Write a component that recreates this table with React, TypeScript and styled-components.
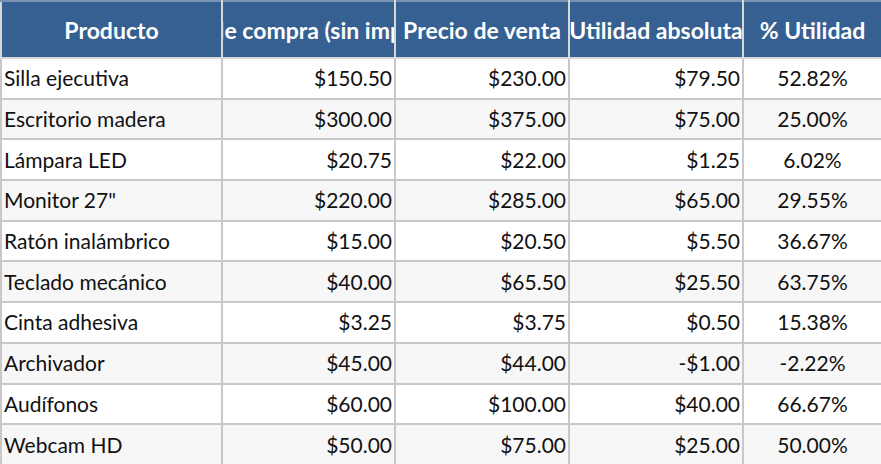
import React from "react";
import styled, { createGlobalStyle } from "styled-components";

const Global = createGlobalStyle`
  html, body { margin: 0; padding: 0; background: #ffffff; }
  body { font-family: Lato, "Open Sans", sans-serif; }
`;

const Table = styled.table`
  width: 881px;
  table-layout: fixed;
  border-collapse: collapse;
  font-family: Lato, sans-serif;
  font-size: 21px;
  color: #111;
`;

const HeadCell = styled.th`
  height: 55px;
  background: #366092;
  color: #ffffff;
  font-weight: 700;
  font-size: 23px;
  padding: 0;
  border: 2px solid #d8d8d8;
  border-top-color: #7b93b3;
`;

const HeadText = styled.div`
  display: flex;
  justify-content: center;
  white-space: nowrap;
  overflow: hidden;
`;

const Row = styled.tr<{ $alt: boolean }>`
  height: 40.7px;
  background: ${(p) => (p.$alt ? "#f7f7f7" : "#ffffff")};
`;

const Cell = styled.td<{ $align: "left" | "right" | "center" }>`
  text-align: ${(p) => p.$align};
  padding: 0 2px 1px;
  border: 2px solid #c8c8c8;
  white-space: nowrap;
  overflow: hidden;
`;

type Item = [string, string, string, string, string];

const data: Item[] = [
  ["Silla ejecutiva", "$150.50", "$230.00", "$79.50", "52.82%"],
  ["Escritorio madera", "$300.00", "$375.00", "$75.00", "25.00%"],
  ["Lámpara LED", "$20.75", "$22.00", "$1.25", "6.02%"],
  ['Monitor 27"', "$220.00", "$285.00", "$65.00", "29.55%"],
  ["Ratón inalámbrico", "$15.00", "$20.50", "$5.50", "36.67%"],
  ["Teclado mecánico", "$40.00", "$65.50", "$25.50", "63.75%"],
  ["Cinta adhesiva", "$3.25", "$3.75", "$0.50", "15.38%"],
  ["Archivador", "$45.00", "$44.00", "-$1.00", "-2.22%"],
  ["Audífonos", "$60.00", "$100.00", "$40.00", "66.67%"],
  ["Webcam HD", "$50.00", "$75.00", "$25.00", "50.00%"],
];

const headers = [
  "Producto",
  "Precio de compra (sin impuestos)",
  "Precio de venta",
  "Utilidad absoluta",
  "% Utilidad",
];

const widths = [221, 173, 174, 174, 139];

export default function App() {
  return (
    <>
      <Global />
      <Table>
        <colgroup>
          {widths.map((w, i) => (
            <col key={i} style={{ width: w }} />
          ))}
        </colgroup>
        <thead>
          <tr>
            {headers.map((h) => (
              <HeadCell key={h}>
                <HeadText>
                  <span>{h}</span>
                </HeadText>
              </HeadCell>
            ))}
          </tr>
        </thead>
        <tbody>
          {data.map((r, i) => (
            <Row key={r[0]} $alt={i % 2 === 1}>
              <Cell $align="left">{r[0]}</Cell>
              <Cell $align="right">{r[1]}</Cell>
              <Cell $align="right">{r[2]}</Cell>
              <Cell $align="right">{r[3]}</Cell>
              <Cell $align="center">{r[4]}</Cell>
            </Row>
          ))}
        </tbody>
      </Table>
    </>
  );
}
